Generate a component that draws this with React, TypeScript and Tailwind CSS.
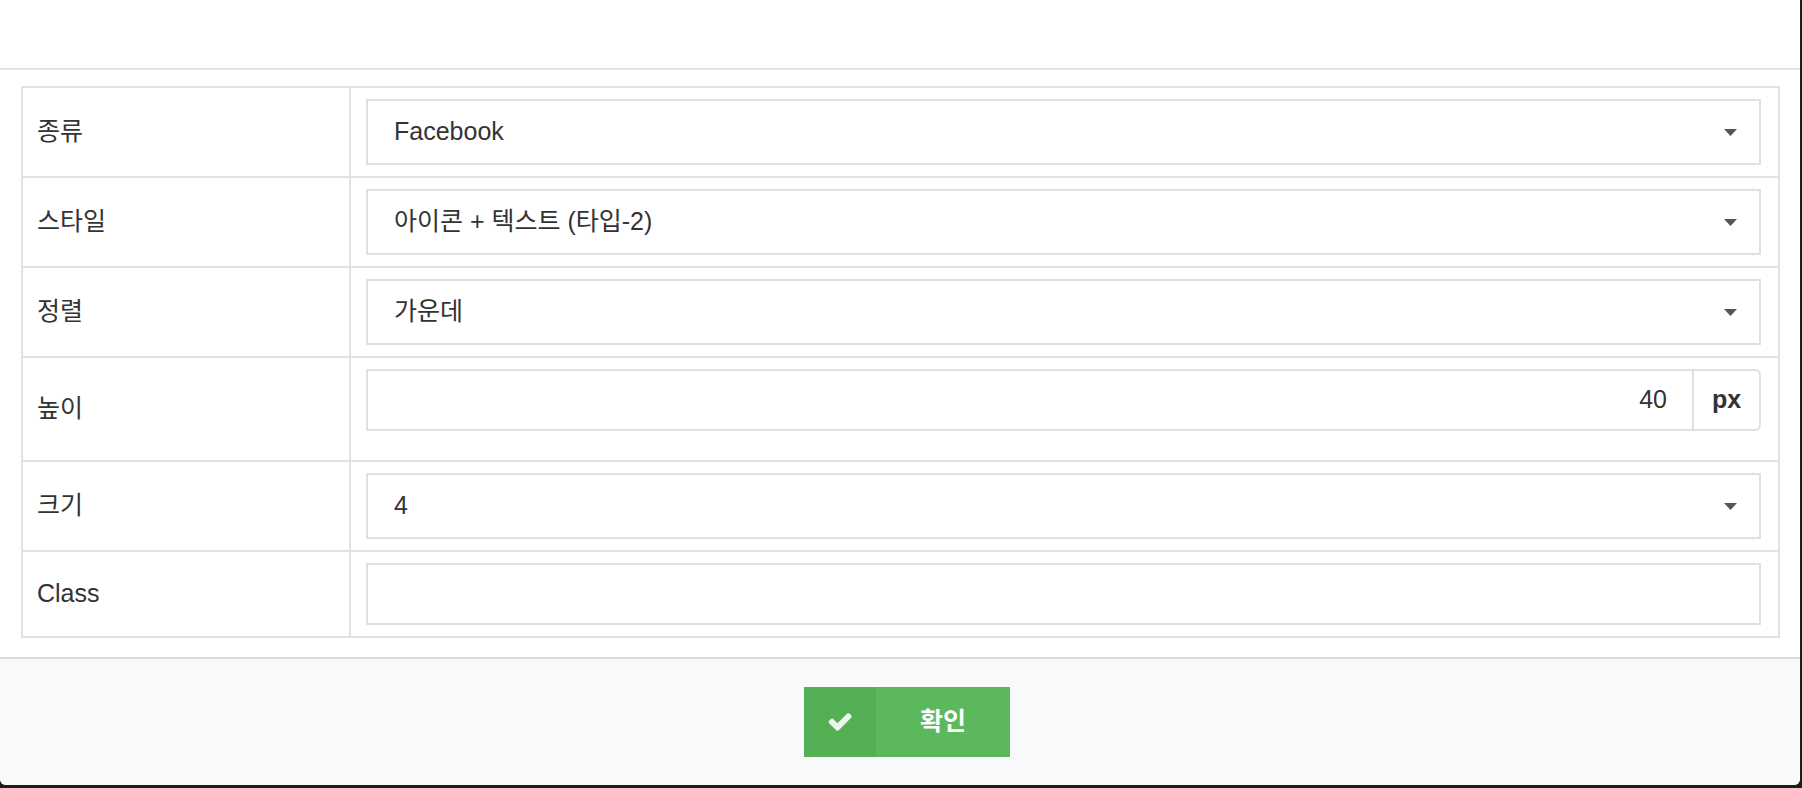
const font = { fontFamily: '"Liberation Sans", "Noto Sans CJK KR", sans-serif' };

type Row = { label: string; kind: "select" | "number" | "text"; value: string };

const rows: Row[] = [
  { label: "종류", kind: "select", value: "Facebook" },
  { label: "스타일", kind: "select", value: "아이콘 + 텍스트 (타입-2)" },
  { label: "정렬", kind: "select", value: "가운데" },
  { label: "높이", kind: "number", value: "40" },
  { label: "크기", kind: "select", value: "4" },
  { label: "Class", kind: "text", value: "" },
];

function Caret() {
  return <svg width="13" height="7" viewBox="0 0 13 7" className="shrink-0"><path d="M0 0h13L6.5 7z" fill="#555" /></svg>;
}

function Field({ row }: { row: Row }) {
  if (row.kind === "select") {
    return <div className="flex h-[66px] items-center justify-between border-2 border-[#e0e0e0] bg-white pl-[26px] pr-[22px]">
      <span className="text-[25px] text-[#333]">{row.value}</span>
      <Caret />
    </div>;
  }
  if (row.kind === "number") {
    return <div className="flex h-[62px]">
      <div className="flex flex-1 items-center justify-end border-2 border-r-0 border-[#e0e0e0] pr-[25px] text-[25px] text-[#333]">{row.value}</div>
      <div className="flex w-[69px] items-center justify-center rounded-r-[6px] border-2 border-[#e0e0e0] text-[25px] font-bold text-[#333]">px</div>
    </div>;
  }
  return <div className="h-[62px] border-2 border-[#e0e0e0] bg-white" />;
}

export default function App() {
  return <div className="h-[788px] w-[1802px] overflow-hidden bg-[#1d1d1d]" style={font}>
    <div className="flex h-[785px] w-[1800px] flex-col overflow-hidden rounded-b-[6px] bg-white">
      <div className="h-[70px] shrink-0 border-b-2 border-[#e3e3e3]" />
      <div className="pb-[19px] pl-[21px] pr-[20px] pt-[16px]">
        <div className="border-2 border-[#e2e2e2]">
          {rows.map((row, i) => (
            <div key={row.label} className={`flex ${i > 0 ? "border-t-2 border-[#e2e2e2]" : ""}`}>
              <div className="flex w-[328px] shrink-0 items-center border-r-2 border-[#e2e2e2] pl-[14px] text-[25px] text-[#333]">{row.label}</div>
              <div className={`flex-1 pl-[15px] pr-[17px] pt-[11px] ${row.kind === "number" ? "pb-[29px]" : "pb-[11px]"}`}>
                <Field row={row} />
              </div>
            </div>
          ))}
        </div>
      </div>
      <div className="flex flex-1 items-center justify-center border-t-2 border-[#dcdcdc] bg-[#f8f9fb] pl-[14px]">
        <button className="flex h-[70px] w-[206px] bg-[#5cb85c] text-white">
          <span className="flex h-full w-[72px] items-center justify-center bg-[#55af55]">
            <svg width="24" height="18" viewBox="90 330 1590 1200"><path fill="#eef7ee" d="M1671 566q0 40-28 68l-724 724-136 136q-28 28-68 28t-68-28l-136-136-362-362q-28-28-28-68t28-68l136-136q28-28 68-28t68 28l294 295 656-657q28-28 68-28t68 28l136 136q28 28 28 68z" /></svg>
          </span>
          <span className="flex flex-1 items-center justify-center text-[25px] font-bold">확인</span>
        </button>
      </div>
    </div>
  </div>;
}
